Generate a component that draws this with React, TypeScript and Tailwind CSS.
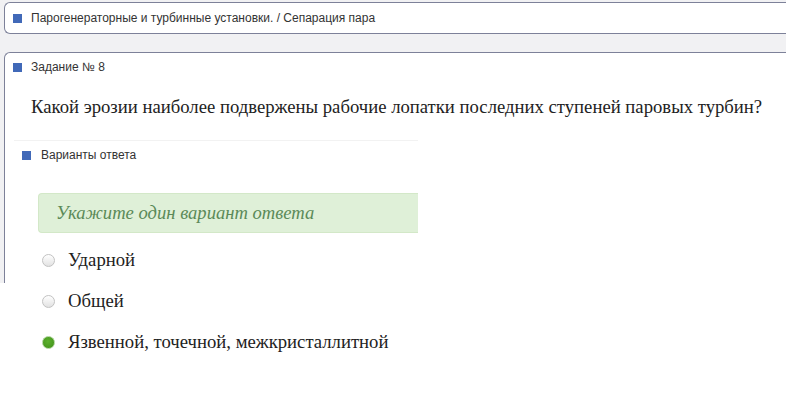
const answers = [
  { id: "a1", text: "Ударной", checked: false },
  { id: "a2", text: "Общей", checked: false },
  { id: "a3", text: "Язвенной, точечной, межкристаллитной", checked: true },
];

function Square() {
  return <div className="w-[9px] h-[9px] shrink-0 bg-[#4169b8]"></div>;
}

function Radio({ checked }: { checked: boolean }) {
  if (checked) {
    return (
      <div className="w-[13px] h-[13px] shrink-0 rounded-full border border-[#a9d095] bg-[radial-gradient(circle_at_45%_40%,#5cb02e,#3f8f17)]"></div>
    );
  }
  return (
    <div className="w-[13px] h-[13px] shrink-0 rounded-full border border-[#c2c2c2] bg-[linear-gradient(#ffffff,#e2e2e2)]"></div>
  );
}

export default function App() {
  return (
    <div className="w-[786px] h-[399px] bg-white overflow-hidden font-['Liberation_Sans',Arial,sans-serif] text-[#333]">
      <div className="h-[283px] bg-[#f1f1f3] pt-[2px] pl-[4px] flex flex-col">
        {/* Breadcrumb */}
        <div className="h-[32px] shrink-0 bg-white border border-r-0 border-[#7d8199] rounded-l-[6px] flex items-center pl-[8px] gap-[9px] text-[12px]">
          <Square />
          <span>Парогенераторные и турбинные установки. / Сепарация пара</span>
        </div>

        {/* Task */}
        <div className="mt-[18px] flex-1 min-h-0 bg-white border-t border-l border-[#7d8199] rounded-tl-[6px]">
          <div className="pt-[7px] pl-[8px] h-[21px] flex items-end">
            <div className="h-[14px] flex items-center gap-[9px] text-[12px]">
              <Square />
              <span>Задание № 8</span>
            </div>
          </div>

          <p className="mt-[22px] pl-[26px] text-[18.7px] leading-[22px] whitespace-nowrap font-['Liberation_Serif','Times_New_Roman',serif] text-[#222]">
            Какой эрозии наиболее подвержены рабочие лопатки последних ступеней паровых турбин?
          </p>

          {/* Answers panel */}
          <div className="mt-[22px] ml-[9px] w-[404px] bg-white border-t border-[#f2f2f2] pb-[8px]">
            <div className="pt-[7px] pl-[8px] h-[21px] flex items-end">
              <div className="h-[14px] flex items-center gap-[10px] text-[12px]">
                <Square />
                <span>Варианты ответа</span>
              </div>
            </div>

            <div className="mt-[31px] ml-[24px] h-[40px] bg-[#dff0d8] border border-r-0 border-[#d3e8c8] rounded-l-[4px] flex items-center pl-[17px]">
              <span className="italic text-[18.6px] font-['Liberation_Serif','Times_New_Roman',serif] text-[#5b8a58]">
                Укажите один вариант ответа
              </span>
            </div>

            <div className="mt-[7px] flex flex-col">
              {answers.map((a) => (
                <div key={a.id} className="h-[41px] flex items-center ml-[28px] gap-[13px]">
                  <Radio checked={a.checked} />
                  <span className="text-[18.7px] font-['Liberation_Serif','Times_New_Roman',serif] text-[#222]">
                    {a.text}
                  </span>
                </div>
              ))}
            </div>
          </div>
        </div>
      </div>
    </div>
  );
}
